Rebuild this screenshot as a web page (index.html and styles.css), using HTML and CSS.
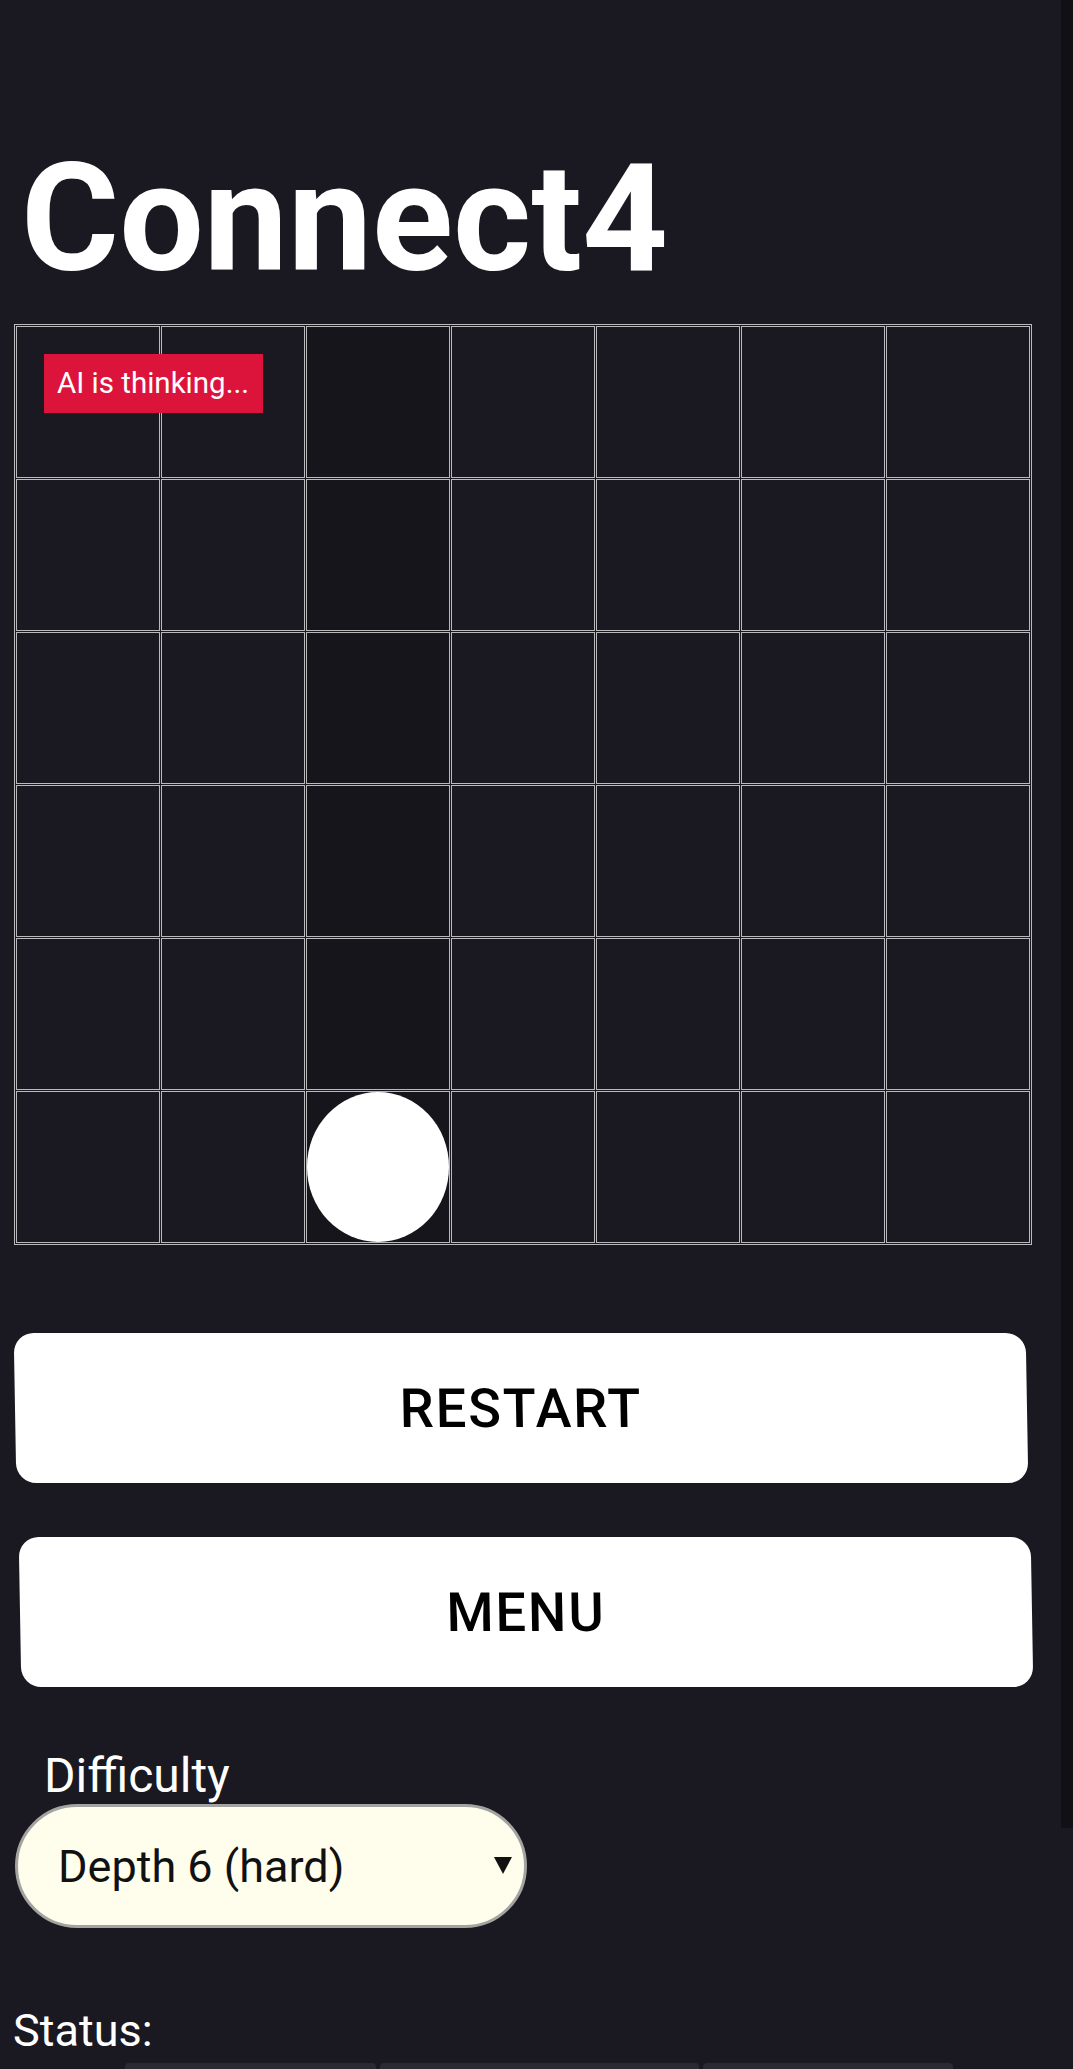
FILE: index.html
```html
<!DOCTYPE html>
<html lang="en">
<head>
<meta charset="utf-8">
<title>Connect4</title>
<link rel="stylesheet" href="styles.css">
</head>
<body>
<div class="scroll-strip"></div>
<main class="page">
  <h1 class="title">Connect4</h1>

  <section class="board">
    <div class="thinking">AI is thinking...</div>
    <div class="cell"></div><div class="cell"></div><div class="cell hover"></div><div class="cell"></div><div class="cell"></div><div class="cell"></div><div class="cell"></div>
    <div class="cell"></div><div class="cell"></div><div class="cell hover"></div><div class="cell"></div><div class="cell"></div><div class="cell"></div><div class="cell"></div>
    <div class="cell"></div><div class="cell"></div><div class="cell hover"></div><div class="cell"></div><div class="cell"></div><div class="cell"></div><div class="cell"></div>
    <div class="cell"></div><div class="cell"></div><div class="cell hover"></div><div class="cell"></div><div class="cell"></div><div class="cell"></div><div class="cell"></div>
    <div class="cell"></div><div class="cell"></div><div class="cell hover"></div><div class="cell"></div><div class="cell"></div><div class="cell"></div><div class="cell"></div>
    <div class="cell"></div><div class="cell"></div><div class="cell hover"><div class="disc"></div></div><div class="cell"></div><div class="cell"></div><div class="cell"></div><div class="cell"></div>
  </section>

  <button class="btn btn-restart" type="button">RESTART</button>
  <button class="btn btn-menu" type="button">MENU</button>

  <label class="difficulty-label" for="depth">Difficulty</label>
  <div class="select-wrap">
    <select id="depth" class="select">
      <option>Depth 6 (hard)</option>
    </select>
  </div>

  <div class="status-label">Status:</div>
  <div class="status-row">
    <div class="status-box box-a"></div>
    <div class="status-box box-b"></div>
    <div class="status-box box-c"></div>
  </div>
</main>
</body>
</html>
```

FILE: styles.css
```css
html, body {
  margin: 0;
  padding: 0;
  background: #1a1821;
  overflow: hidden;
  height: 2069px;
}

body {
  font-family: Roboto, "Liberation Sans", sans-serif;
  color: #ffffff;
  position: relative;
}

.scroll-strip {
  position: absolute;
  top: 0;
  right: 0;
  width: 12px;
  height: 1828px;
  background: #111015;
}

.page {
  display: flex;
  flex-direction: column;
  align-items: flex-start;
  width: 1061px;
}

.title {
  margin: 131px 0 0 21px;
  font-size: 150px;
  font-weight: 700;
  line-height: normal;
}

.board {
  position: relative;
  margin: 17px 0 0 14px;
  border: 1px solid rgba(255, 255, 255, 0.7);
  padding: 1px;
  display: grid;
  grid-template-columns: repeat(7, 144px);
  grid-template-rows: repeat(6, 152px);
  gap: 1px;
}

.cell {
  border: 1px solid rgba(255, 255, 255, 0.7);
  background: #1a1821;
  display: flex;
}

.cell.hover {
  background: #16151c;
}

.disc {
  flex: 1;
  background: #ffffff;
  border-radius: 50%;
}

.thinking {
  position: absolute;
  left: 29px;
  top: 29px;
  background: #dc143c;
  color: #ffffff;
  font-size: 29.5px;
  line-height: 59px;
  padding: 0 14px 0 13px;
  white-space: nowrap;
}

.btn {
  width: 1012px;
  height: 150px;
  background: #ffffff;
  border: none;
  border-radius: 20px;
  font-family: Roboto, "Liberation Sans", sans-serif;
  font-size: 54px;
  font-weight: 500;
  letter-spacing: 2px;
  color: #000000;
  transform: skewX(1deg);
  padding: 0;
}

.btn-restart {
  margin: 88px 0 0 15px;
}

.btn-menu {
  margin: 54px 0 0 20px;
}

.difficulty-label {
  margin: 60px 0 0 44px;
  font-size: 48px;
  line-height: normal;
}

.select-wrap {
  position: relative;
  margin: 0 0 0 15px;
}

.select-wrap::after {
  content: "";
  position: absolute;
  right: 15px;
  top: 53px;
  border-left: 9px solid transparent;
  border-right: 9px solid transparent;
  border-top: 17px solid #111111;
  pointer-events: none;
}

.select {
  appearance: none;
  -webkit-appearance: none;
  width: 512px;
  height: 124px;
  border: 3px solid #a3a3a0;
  border-radius: 62px;
  background: #fffdeb;
  color: #111111;
  font-family: Roboto, "Liberation Sans", sans-serif;
  font-size: 45px;
  padding: 0 0 0 40px;
}

.status-label {
  margin: 76px 0 0 13px;
  font-size: 45px;
  line-height: normal;
}

.status-row {
  display: flex;
  gap: 4px;
  margin: 6px 0 0 125px;
}

.status-box {
  height: 20px;
  background: #2b2a33;
  border-radius: 4px 4px 0 0;
}

.box-a { width: 251px; }
.box-b { width: 319px; }
.box-c { width: 250px; }
```
